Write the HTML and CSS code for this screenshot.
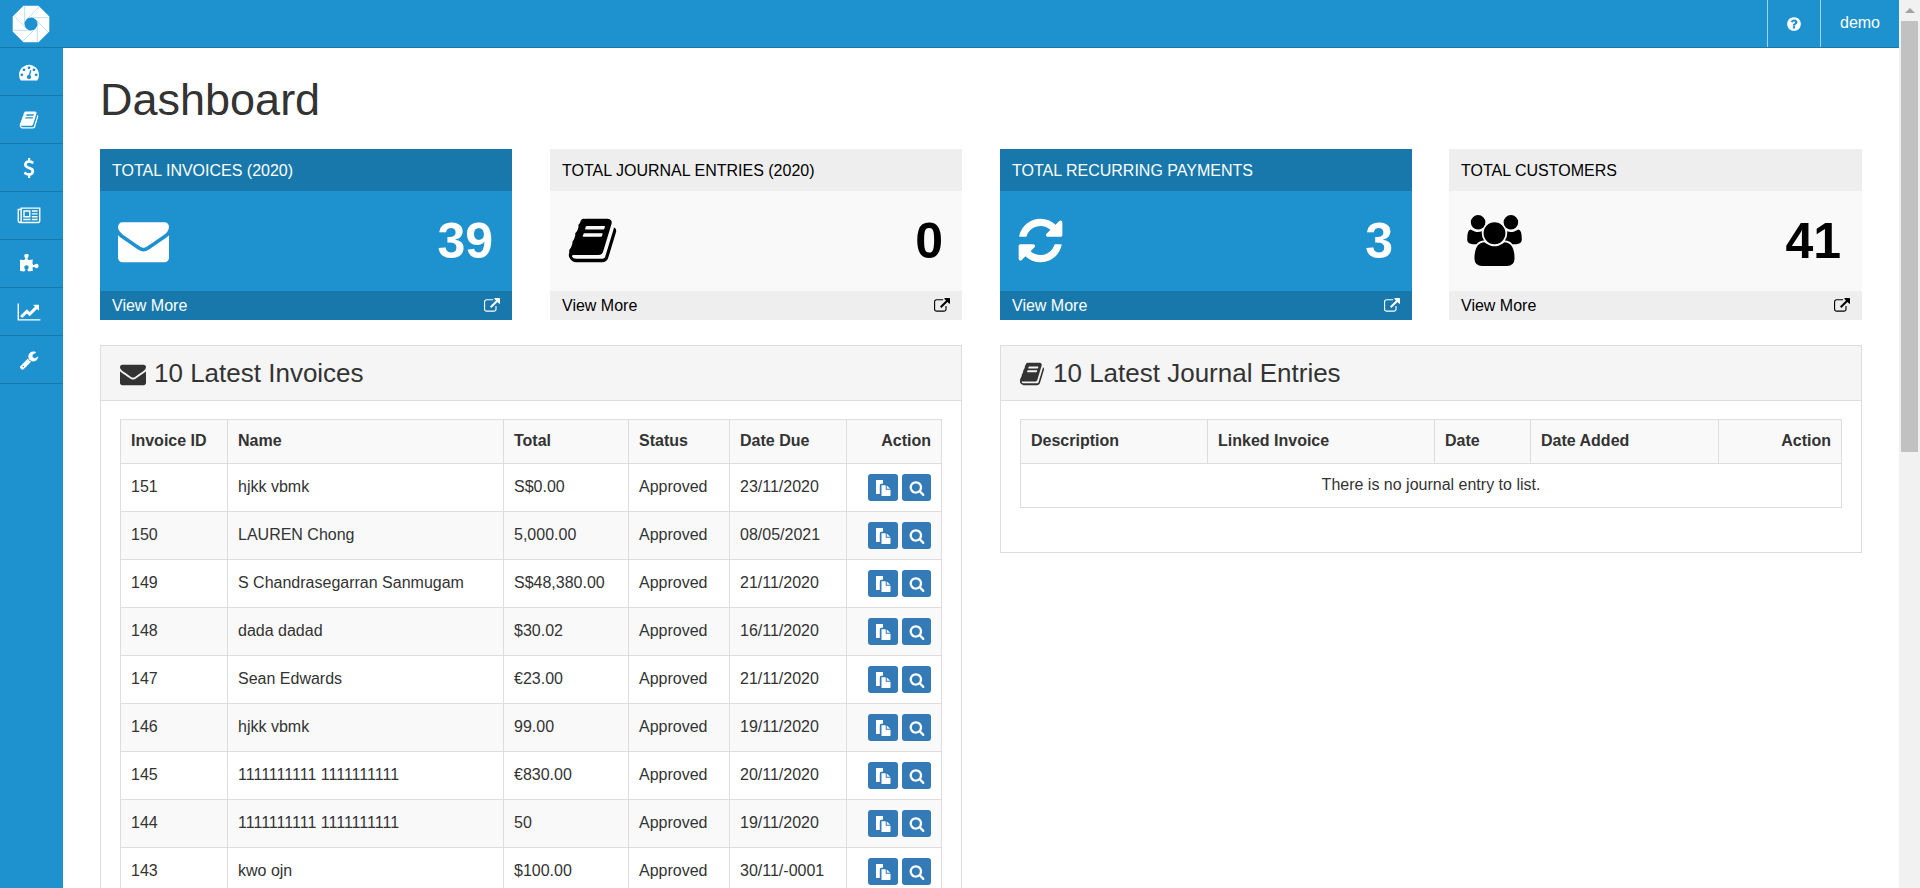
FILE: index.html
```html
<!DOCTYPE html>
<html lang="en">
<head>
    <meta charset="UTF-8">
    <title>Dashboard</title>
    <link rel="stylesheet" href="styles.css">
</head>
<body>
    <svg class="icon-defs" xmlns="http://www.w3.org/2000/svg">
        <symbol id="i-envelope" viewBox="0 0 1792 1792"><path d="M1792 710v794q0 66-47 113t-113 47h-1472q-66 0-113-47t-47-113v-794q44 49 101 87 362 246 497 345 57 42 92.5 65.5t94.5 48 110 24.5h2q51 0 110-24.5t94.5-48 92.5-65.5q170-123 498-345 57-39 100-87zm0-294q0 79-49 151t-122 123q-376 261-468 325-10 7-42.5 30.5t-54 38-52 32.5-57.5 27-50 9h-2q-23 0-50-9t-57.5-27-52-32.5-54-38-42.5-30.5q-91-64-262-182.5t-205-142.5q-62-42-117-115.5t-55-136.5q0-78 41.5-130t118.5-52h1472q65 0 112.5 47t47.5 113z"/></symbol>
        <symbol id="i-book" viewBox="0 0 1792 1792"><path d="M1703 478q40 57 18 129l-275 906q-19 64-76.5 107.5t-122.5 43.5h-923q-77 0-148.5-53.5t-99.5-131.5q-24-67-2-127 0-4 3-27t4-37q1-8-3-21.5t-3-19.5q2-11 8-21t16.5-23.5 16.5-23.5q23-38 45-91.5t30-91.5q3-10 .5-30t-.5-28q3-11 17-28t17-23q21-36 42-92t25-90q1-9-2.5-32t.5-28q4-13 22-30.5t22-22.5q19-26 42.5-84.5t27.5-96.5q1-8-3-25.5t-2-26.5q2-8 9-18t18-23 17-21q8-12 16.5-30.5t15-35 16-36 19.5-32 26.5-23.5 36-11.5 47.5 5.5l-1 3q38-9 51-9h761q74 0 114 56t18 130l-274 906q-36 119-71.5 153.5t-128.5 34.5h-869q-27 0-38 15-11 16-1 43 24 70 144 70h923q29 0 56-15.5t35-41.5l300-987q7-22 5-57 38 15 59 43zm-1064 2q-4 13 2 22.5t20 9.5h608q13 0 25.5-9.5t16.5-22.5l21-64q4-13-2-22.5t-20-9.5h-608q-13 0-25.5 9.5t-16.5 22.5zm-83 256q-4 13 2 22.5t20 9.5h608q13 0 25.5-9.5t16.5-22.5l21-64q4-13-2-22.5t-20-9.5h-608q-13 0-25.5 9.5t-16.5 22.5z"/></symbol>
        <symbol id="i-refresh" viewBox="0 0 1792 1792"><path d="M1639 1056q0 5-1 7-64 268-268 434.5t-478 166.5q-146 0-282.5-55t-243.5-157l-129 129q-19 19-45 19t-45-19-19-45v-448q0-26 19-45t45-19h448q26 0 45 19t19 45-19 45l-137 137q71 66 161 102t187 36q134 0 250-65t186-179q11-17 53-117 8-23 30-23h192q13 0 22.5 9.5t9.5 22.5zm25-800v448q0 26-19 45t-45 19h-448q-26 0-45-19t-19-45 19-45l138-138q-148-137-349-137-134 0-250 65t-186 179q-11 17-53 117-8 23-30 23h-199q-13 0-22.5-9.5t-9.5-22.5v-7q65-268 270-434.5t480-166.5q146 0 284 55.5t245 156.5l130-129q19-19 45-19t45 19 19 45z"/></symbol>
        <symbol id="i-users" viewBox="0 0 1920 1792"><path d="M593 896q-162 5-265 128h-134q-82 0-138-40.5t-56-118.5q0-353 124-353 6 0 43.5 21t97.5 42.5 119 21.5q67 0 133-23-5 37-5 66 0 139 81 256zm1071 637q0 120-73 189.5t-194 69.5h-874q-121 0-194-69.5t-73-189.5q0-53 3.5-103.5t14-109 26.5-108.5 43-97.5 62-81 85.5-53.5 111.5-20q10 0 43 21.5t73 48 107 48 135 21.5 135-21.5 107-48 73-48 43-21.5q61 0 111.5 20t85.5 53.5 62 81 43 97.5 26.5 108.5 14 109 3.5 103.5zm-1024-1277q0 106-75 181t-181 75-181-75-75-181 75-181 181-75 181 75 75 181zm704 384q0 159-112.5 271.5t-271.5 112.5-271.5-112.5-112.5-271.5 112.5-271.5 271.5-112.5 271.5 112.5 112.5 271.5zm576 225q0 78-56 118.5t-138 40.5h-134q-103-123-265-128 81-117 81-256 0-29-5-66 66 23 133 23 59 0 119-21.5t97.5-42.5 43.5-21q124 0 124 353zm-128-609q0 106-75 181t-181 75-181-75-75-181 75-181 181-75 181 75 75 181z"/></symbol>
        <symbol id="i-external" viewBox="0 0 1792 1792"><path d="M1408 928v320q0 119-84.5 203.5t-203.5 84.5h-832q-119 0-203.5-84.5t-84.5-203.5v-832q0-119 84.5-203.5t203.5-84.5h704q14 0 23 9t9 23v64q0 14-9 23t-23 9h-704q-66 0-113 47t-47 113v832q0 66 47 113t113 47h832q66 0 113-47t47-113v-320q0-14 9-23t23-9h64q14 0 23 9t9 23zm384-864v512q0 26-19 45t-45 19-45-19l-176-176-652 652q-10 10-23 10t-23-10l-114-114q-10-10-10-23t10-23l652-652-176-176q-19-19-19-45t19-45 45-19h512q26 0 45 19t19 45z"/></symbol>
        <symbol id="i-dashboard" viewBox="0 0 1792 1792"><path d="M384 1152q0-53-37.5-90.5t-90.5-37.5-90.5 37.5-37.5 90.5 37.5 90.5 90.5 37.5 90.5-37.5 37.5-90.5zm192-448q0-53-37.5-90.5t-90.5-37.5-90.5 37.5-37.5 90.5 37.5 90.5 90.5 37.5 90.5-37.5 37.5-90.5zm428 481l101-382q6-26-7.5-48.5t-38.5-29.5-48 6.5-30 39.5l-101 382q-60 5-107 43.5t-63 98.5q-20 77 20 146t117 89 146-20 89-117q16-60-6-117t-72-91zm660-33q0-53-37.5-90.5t-90.5-37.5-90.5 37.5-37.5 90.5 37.5 90.5 90.5 37.5 90.5-37.5 37.5-90.5zm-640-640q0-53-37.5-90.5t-90.5-37.5-90.5 37.5-37.5 90.5 37.5 90.5 90.5 37.5 90.5-37.5 37.5-90.5zm448 192q0-53-37.5-90.5t-90.5-37.5-90.5 37.5-37.5 90.5 37.5 90.5 90.5 37.5 90.5-37.5 37.5-90.5zm320 448q0 261-141 483-19 29-54 29h-1402q-35 0-54-29-141-221-141-483 0-182 71-348t191-286 286-191 348-71 348 71 286 191 191 286 71 348z"/></symbol>
        <symbol id="i-dollar" viewBox="0 0 1792 1792"><path d="M1362 1185q0 153-99.5 263.5t-258.5 136.5v175q0 14-9 23t-23 9h-135q-13 0-22.5-9.5t-9.5-22.5v-175q-66-9-127.5-31t-101.5-44.5-74-48-46.5-37.5-17.5-18q-17-21-2-41l103-135q7-10 23-12 15-2 24 9l2 2q113 99 243 125 37 8 74 8 81 0 142.5-43t61.5-122q0-28-15-53t-33.5-42-58.5-37.5-66-32-80-32.5q-39-16-61.5-25t-61.5-26.5-62.5-31-56.5-35.5-53.5-42.5-43.5-49-35.5-58-21-66.5-8.5-78q0-138 98-242t255-134v-180q0-13 9.5-22.5t22.5-9.5h135q14 0 23 9t9 23v176q57 6 110.5 23t87 33.5 63.5 37.5 39 29 15 14q17 18 5 38l-81 146q-8 15-23 16-14 3-27-7-3-3-14.5-12t-39-26.5-58.5-32-74.5-26-85.5-11.5q-95 0-155 43t-60 111q0 26 8.5 48t29.5 41.5 39.5 33 56 31 60.5 27 70 27.5q53 20 81 31.5t76 35 75.5 42.5 62 50 53 63.5 31.5 76.5 13 94z"/></symbol>
        <symbol id="i-news" viewBox="0 0 2048 1792"><path d="M1024 512h-384v384h384v-384zm128 640v128h-640v-128h640zm0-768v640h-640v-640h640zm640 768v128h-512v-128h512zm0-256v128h-512v-128h512zm0-256v128h-512v-128h512zm0-256v128h-512v-128h512zm-1536 960v-960h-128v960q0 26 19 45t45 19 45-19 19-45zm1664 0v-1088h-1536v1088q0 33-11 64h1483q26 0 45-19t19-45zm128-1216v1216q0 80-56 136t-136 56h-1664q-80 0-136-56t-56-136v-1088h256v-128h1792z"/></symbol>
        <symbol id="i-puzzle" viewBox="0 0 1792 1792"><path d="M1755 1083q0 81-44.5 135t-123.5 54q-41 0-77.5-17.5t-59-38-56.5-38-71-17.5q-110 0-110 124 0 39 16 115t15 115v5q-22 0-33 1-34 3-97.5 11.5t-115.5 13.5-98 5q-61 0-103-26.5t-42-83.5q0-37 17.5-71t38-56.5 38-59 17.5-77.5q0-79-54-123.5t-135-44.5q-84 0-143 45.5t-59 127.5q0 43 15 83t33.5 64.5 33.5 53 15 50.5q0 45-46 89-37 35-117 35-95 0-245-24-9-2-27.5-4t-27.5-4l-13-2q-1 0-3-1-2 0-2-1v-1024q2 1 17.5 3.5t34 5 21.5 3.5q150 24 245 24 80 0 117-35 46-44 46-89 0-22-15-50.5t-33.5-53-33.5-64.5-15-83q0-82 59-127.5t144-45.5q80 0 134 44.5t54 123.5q0 41-17.5 77.5t-38 59-38 56.5-17.5 71q0 57 42 83.5t103 26.5q64 0 180-15t163-17v2q-1 2-3.5 17.5t-5 34-3.5 21.5q-24 150-24 245 0 80 35 117 44 46 89 46 22 0 50.5-15t53-33.5 64.5-33.5 83-15q82 0 127.5 59t45.5 143z"/></symbol>
        <symbol id="i-chart" viewBox="0 0 2048 1792"><path d="M2048 1536v128h-2048v-1536h128v1408h1920zm-128-1248v435q0 21-19.5 29.5t-35.5-7.5l-121-121-633 633q-10 10-23 10t-23-10l-233-233-416 416-192-192 585-585q10-10 23-10t23 10l233 233 464-464-121-121q-16-16-7.5-35.5t29.5-19.5h435q14 0 23 9t9 23z"/></symbol>
        <symbol id="i-wrench" viewBox="0 0 1792 1792"><path d="M448 1472q0-26-19-45t-45-19-45 19-19 45 19 45 45 19 45-19 19-45zm644-420l-682 682q-37 37-90 37-52 0-91-37l-106-108q-38-36-38-90 0-53 38-91l681-681q39 98 114.5 173.5t173.5 114.5zm634-435q0 39-23 106-47 134-164.5 217.5t-258.5 83.5q-185 0-316.5-131.5t-131.5-316.5 131.5-316.5 316.5-131.5q58 0 121.5 16.5t107.5 46.5q16 11 16 28t-16 28l-293 169v224l193 107q5-3 79-48.5t135.5-81 70.5-35.5q15 0 23.5 10t8.5 25z"/></symbol>
        <symbol id="i-question" viewBox="0 0 1792 1792"><path d="M1024 1376v-192q0-14-9-23t-23-9h-192q-14 0-23 9t-9 23v192q0 14 9 23t23 9h192q14 0 23-9t9-23zm256-672q0-88-55.5-163t-138.5-116-170-41q-243 0-371 213-15 24 8 42l132 100q7 6 19 6 16 0 25-12 53-68 86-92 34-24 86-24 48 0 85.5 26t37.5 59q0 38-20 61t-68 45q-63 28-115.5 86.5t-52.5 125.5v36q0 14 9 23t23 9h192q14 0 23-9t9-23q0-19 21.5-49.5t54.5-49.5q32-18 49-28.5t46-35 44.5-48 28-60.5 12.5-81zm384 192q0 209-103 385.5t-279.5 279.5-385.5 103-385.5-103-279.5-279.5-103-385.5 103-385.5 279.5-279.5 385.5-103 385.5 103 279.5 279.5 103 385.5z"/></symbol>
        <symbol id="i-files" viewBox="0 0 16 16"><path d="M1.5 0h6.5v3.8h-1.6a1.6 1.6 0 0 0-1.6 1.6v8.6h-3.3a.5.5 0 0 1-.5-.5v-13a.5.5 0 0 1 .5-.5z"/><path d="M6.5 5.2h4.2v4.5h4.8v5.8a.5.5 0 0 1-.5.5h-8a.5.5 0 0 1-.5-.5z"/><path d="M11.7 5.4l3.6 3.4h-3.6z"/></symbol>
        <symbol id="i-search" viewBox="0 0 1792 1792"><path d="M1216 832q0-185-131.5-316.5t-316.5-131.5-316.5 131.5-131.5 316.5 131.5 316.5 316.5 131.5 316.5-131.5 131.5-316.5zm512 832q0 52-38 90t-90 38q-54 0-90-38l-343-342q-179 124-399 124-143 0-273.5-55.5t-225-150-150-225-55.5-273.5 55.5-273.5 150-225 225-150 273.5-55.5 273.5 55.5 225 150 150 225 55.5 273.5q0 220-124 399l343 343q37 37 37 90z"/></symbol>
    </svg>

    <div class="app">
        <div class="window">
            <header class="topbar">
                <a class="logo" href="#">
                    <svg viewBox="0 0 38 38" width="38" height="38">
                        <path class="logo-ring" fill-rule="evenodd" d="M11.7 1.4 L26.3 1.4 L36.6 11.7 L36.6 26.3 L26.3 36.6 L11.7 36.6 L1.4 26.3 L1.4 11.7 Z M19 11.8 A7.2 7.2 0 1 0 19 26.2 A7.2 7.2 0 1 0 19 11.8 Z"/>
                        <path class="logo-blades" d="M25.3 19 L25.3 37 M23.45 23.45 L10.7 36.2 M19 25.3 L1 25.3 M14.55 23.45 L1.85 10.8 M12.7 19 L12.7 1 M14.55 14.55 L27.3 1.8 M19 12.7 L37 12.7 M23.45 14.55 L36.2 27.3"/>
                    </svg>
                </a>
                <div class="topbar-right">
                    <a class="topbar-link help" href="#"><svg class="icon"><use href="#i-question"/></svg></a>
                    <a class="topbar-link user" href="#">demo</a>
                </div>
            </header>

            <div class="layout">
                <nav class="sidebar">
                    <a href="#"><svg class="icon"><use href="#i-dashboard"/></svg></a>
                    <a href="#"><svg class="icon"><use href="#i-book"/></svg></a>
                    <a href="#"><svg class="icon"><use href="#i-dollar"/></svg></a>
                    <a href="#"><svg class="icon wide"><use href="#i-news"/></svg></a>
                    <a href="#"><svg class="icon"><use href="#i-puzzle"/></svg></a>
                    <a href="#"><svg class="icon wide"><use href="#i-chart"/></svg></a>
                    <a href="#"><svg class="icon"><use href="#i-wrench"/></svg></a>
                </nav>

                <main class="content">
                    <h1>Dashboard</h1>

                    <div class="tiles">
                        <div class="tile tile-blue">
                            <div class="tile-heading">TOTAL INVOICES (2020)</div>
                            <div class="tile-body">
                                <svg class="tile-icon"><use href="#i-envelope"/></svg>
                                <span class="tile-count">39</span>
                            </div>
                            <a class="tile-footer" href="#">View More <svg class="icon"><use href="#i-external"/></svg></a>
                        </div>
                        <div class="tile tile-grey">
                            <div class="tile-heading">TOTAL JOURNAL ENTRIES (2020)</div>
                            <div class="tile-body">
                                <svg class="tile-icon book"><use href="#i-book"/></svg>
                                <span class="tile-count">0</span>
                            </div>
                            <a class="tile-footer" href="#">View More <svg class="icon"><use href="#i-external"/></svg></a>
                        </div>
                        <div class="tile tile-blue">
                            <div class="tile-heading">TOTAL RECURRING PAYMENTS</div>
                            <div class="tile-body">
                                <svg class="tile-icon refresh"><use href="#i-refresh"/></svg>
                                <span class="tile-count">3</span>
                            </div>
                            <a class="tile-footer" href="#">View More <svg class="icon"><use href="#i-external"/></svg></a>
                        </div>
                        <div class="tile tile-grey tile-last">
                            <div class="tile-heading">TOTAL CUSTOMERS</div>
                            <div class="tile-body">
                                <svg class="tile-icon users"><use href="#i-users"/></svg>
                                <span class="tile-count">41</span>
                            </div>
                            <a class="tile-footer" href="#">View More <svg class="icon"><use href="#i-external"/></svg></a>
                        </div>
                    </div>

                    <div class="panels">
                        <section class="panel">
                            <h2 class="panel-heading"><svg class="panel-icon"><use href="#i-envelope"/></svg> 10 Latest Invoices</h2>
                            <div class="panel-body">
                                <table>
                                    <colgroup>
                                        <col class="inv-id"><col class="inv-name"><col class="inv-total"><col class="inv-status"><col class="inv-due"><col class="inv-action">
                                    </colgroup>
                                    <thead>
                                        <tr><th>Invoice ID</th><th>Name</th><th>Total</th><th>Status</th><th>Date Due</th><th class="right">Action</th></tr>
                                    </thead>
                                    <tbody>
                                        <tr><td>151</td><td>hjkk vbmk</td><td>S$0.00</td><td>Approved</td><td>23/11/2020</td><td class="right"><a class="btn" href="#"><svg class="icon"><use href="#i-files"/></svg></a><a class="btn" href="#"><svg class="icon"><use href="#i-search"/></svg></a></td></tr>
                                        <tr><td>150</td><td>LAUREN Chong</td><td>5,000.00</td><td>Approved</td><td>08/05/2021</td><td class="right"><a class="btn" href="#"><svg class="icon"><use href="#i-files"/></svg></a><a class="btn" href="#"><svg class="icon"><use href="#i-search"/></svg></a></td></tr>
                                        <tr><td>149</td><td>S Chandrasegarran Sanmugam</td><td>S$48,380.00</td><td>Approved</td><td>21/11/2020</td><td class="right"><a class="btn" href="#"><svg class="icon"><use href="#i-files"/></svg></a><a class="btn" href="#"><svg class="icon"><use href="#i-search"/></svg></a></td></tr>
                                        <tr><td>148</td><td>dada dadad</td><td>$30.02</td><td>Approved</td><td>16/11/2020</td><td class="right"><a class="btn" href="#"><svg class="icon"><use href="#i-files"/></svg></a><a class="btn" href="#"><svg class="icon"><use href="#i-search"/></svg></a></td></tr>
                                        <tr><td>147</td><td>Sean Edwards</td><td>€23.00</td><td>Approved</td><td>21/11/2020</td><td class="right"><a class="btn" href="#"><svg class="icon"><use href="#i-files"/></svg></a><a class="btn" href="#"><svg class="icon"><use href="#i-search"/></svg></a></td></tr>
                                        <tr><td>146</td><td>hjkk vbmk</td><td>99.00</td><td>Approved</td><td>19/11/2020</td><td class="right"><a class="btn" href="#"><svg class="icon"><use href="#i-files"/></svg></a><a class="btn" href="#"><svg class="icon"><use href="#i-search"/></svg></a></td></tr>
                                        <tr><td>145</td><td>1111111111 1111111111</td><td>€830.00</td><td>Approved</td><td>20/11/2020</td><td class="right"><a class="btn" href="#"><svg class="icon"><use href="#i-files"/></svg></a><a class="btn" href="#"><svg class="icon"><use href="#i-search"/></svg></a></td></tr>
                                        <tr><td>144</td><td>1111111111 1111111111</td><td>50</td><td>Approved</td><td>19/11/2020</td><td class="right"><a class="btn" href="#"><svg class="icon"><use href="#i-files"/></svg></a><a class="btn" href="#"><svg class="icon"><use href="#i-search"/></svg></a></td></tr>
                                        <tr><td>143</td><td>kwo ojn</td><td>$100.00</td><td>Approved</td><td>30/11/-0001</td><td class="right"><a class="btn" href="#"><svg class="icon"><use href="#i-files"/></svg></a><a class="btn" href="#"><svg class="icon"><use href="#i-search"/></svg></a></td></tr>
                                    </tbody>
                                </table>
                            </div>
                        </section>

                        <section class="panel panel-short">
                            <h2 class="panel-heading"><svg class="panel-icon book"><use href="#i-book"/></svg> 10 Latest Journal Entries</h2>
                            <div class="panel-body">
                                <table>
                                    <colgroup>
                                        <col class="jrn-desc"><col class="jrn-invoice"><col class="jrn-date"><col class="jrn-added"><col class="jrn-action">
                                    </colgroup>
                                    <thead>
                                        <tr><th>Description</th><th>Linked Invoice</th><th>Date</th><th>Date Added</th><th class="right">Action</th></tr>
                                    </thead>
                                    <tbody>
                                        <tr class="empty"><td colspan="5">There is no journal entry to list.</td></tr>
                                    </tbody>
                                </table>
                            </div>
                        </section>
                    </div>
                </main>
            </div>
        </div>

        <div class="scrollbar">
            <span class="scroll-arrow"></span>
            <span class="scroll-thumb"></span>
        </div>
    </div>
</body>
</html>
```

FILE: styles.css
```css
html, body {
    height: 100%;
    margin: 0;
    overflow: hidden;
}

body {
    font-family: "Liberation Sans", Arial, sans-serif;
    font-size: 16px;
    line-height: 1.42857;
    color: #333;
    background-color: #fff;
}

a {
    color: inherit;
    text-decoration: none;
}

.icon-defs {
    display: none;
}

.icon {
    width: 16px;
    height: 16px;
    fill: currentColor;
    display: block;
}

.app {
    display: flex;
    height: 888px;
    overflow: hidden;
}

.window {
    flex: 1;
    min-width: 0;
    display: flex;
    flex-direction: column;
}

/* top bar */
.topbar {
    height: 47px;
    flex: none;
    display: flex;
    justify-content: space-between;
    background-color: #1e91cf;
    border-bottom: 1px solid #1978ab;
    color: #fff;
}

.logo {
    padding: 5px 0 0 12px;
}

.logo-ring {
    fill: #fff;
    stroke: #fff;
    stroke-width: 1.4;
    stroke-linejoin: round;
}

.logo-blades {
    fill: none;
    stroke: #1e91cf;
    stroke-width: 0.5;
    opacity: 0.6;
}

.topbar-right {
    display: flex;
}

.topbar-link {
    display: flex;
    align-items: center;
    justify-content: center;
    border-left: 1px solid #a5d3ec;
}

.help {
    width: 52px;
}

.user {
    width: 78px;
}

/* sidebar */
.layout {
    flex: 1;
    min-height: 0;
    display: flex;
}

.sidebar {
    width: 63px;
    flex: none;
    background-color: #1e91cf;
    color: #fff;
}

.sidebar a {
    height: 47px;
    padding-right: 5px;
    display: flex;
    align-items: center;
    justify-content: center;
    border-bottom: 1px solid #1978ab;
}

.sidebar .icon {
    width: 20px;
    height: 20px;
}

.sidebar .icon.wide {
    width: 24px;
}

/* content */
.content {
    flex: 1;
    min-width: 0;
    padding: 0 37px;
    overflow: hidden;
}

h1 {
    font-size: 45px;
    font-weight: 400;
    line-height: 48px;
    margin: 28px 0 25px;
}

.tiles {
    display: grid;
    grid-template-columns: repeat(4, 412px);
    justify-content: space-between;
}

.tile-blue {
    background-color: #1e91cf;
    color: #fff;
}

.tile-grey {
    background-color: #f9f9f9;
    color: #000;
}

.tile-last {
    margin-left: -1px;
}

.tile-last .tile-body {
    padding-right: 21px;
}

.tile-heading {
    height: 42px;
    line-height: 44px;
    padding: 0 12px;
}

.tile-blue .tile-heading,
.tile-blue .tile-footer {
    background-color: #1978ab;
}

.tile-grey .tile-heading,
.tile-grey .tile-footer {
    background-color: #eee;
}

.tile-body {
    height: 100px;
    padding: 0 19px 0 18px;
    box-sizing: border-box;
    display: flex;
    align-items: center;
    justify-content: space-between;
}

.tile-icon {
    width: 51px;
    height: 51px;
    margin-top: -2px;
    fill: currentColor;
}

.tile-icon.book {
    margin-left: -1px;
}

.tile-icon.refresh {
    margin-left: -3px;
}

.tile-icon.users {
    width: 55px;
}

.tile-count {
    font-size: 50px;
    font-weight: 700;
    line-height: 1;
}

.tile-footer {
    height: 29px;
    padding: 2px 12px 0;
    box-sizing: border-box;
    display: flex;
    align-items: center;
    justify-content: space-between;
}

.tile-footer .icon {
    margin-top: -2px;
}

/* panels */
.panels {
    display: grid;
    grid-template-columns: 862px 862px;
    justify-content: space-between;
    align-items: start;
    margin-top: 25px;
}

.panel {
    border: 1px solid #ddd;
}

.panel-heading {
    height: 53px;
    padding: 1px 19px 0;
    display: flex;
    align-items: center;
    gap: 8px;
    font-size: 26px;
    font-weight: 400;
    margin: 0;
    background-color: #f5f5f5;
    border-bottom: 1px solid #ddd;
}

.panel-icon {
    width: 26px;
    height: 26px;
    fill: currentColor;
}

.panel-icon.book {
    margin-left: -1px;
}

.panel-body {
    padding: 18px 19px 19px;
}

table {
    width: 100%;
    table-layout: fixed;
    border-collapse: collapse;
}

.panel-short table {
    margin-bottom: 25px;
}

th, td {
    border: 1px solid #ddd;
    padding: 0 10px;
    text-align: left;
    white-space: nowrap;
}

th {
    height: 43px;
    font-weight: 700;
    background-color: #f9f9f9;
}

td {
    height: 47px;
}

tbody tr:nth-child(even) td {
    background-color: #f9f9f9;
}

.right,
th.right {
    text-align: right;
}

.empty td {
    height: 43px;
    text-align: center;
}

.inv-id { width: 107px; }
.inv-name { width: 276px; }
.inv-total { width: 125px; }
.inv-status { width: 101px; }
.inv-due { width: 117px; }

.jrn-desc { width: 187px; }
.jrn-invoice { width: 227px; }
.jrn-date { width: 96px; }
.jrn-added { width: 188px; }

.btn {
    display: inline-flex;
    align-items: center;
    justify-content: center;
    width: 30px;
    height: 27px;
    margin-left: 4px;
    vertical-align: middle;
    box-sizing: border-box;
    border-radius: 3px;
    background-color: #337ab7;
    color: #fff;
}

.btn + .btn {
    width: 29px;
}

/* the page's own scrollbar */
.scrollbar {
    width: 21px;
    flex: none;
    box-sizing: border-box;
    padding: 8px 2px 0;
    background-color: #f1f1f1;
    display: flex;
    flex-direction: column;
    align-items: center;
}

.scroll-arrow {
    width: 0;
    height: 0;
    border-left: 5px solid transparent;
    border-right: 5px solid transparent;
    border-bottom: 5px solid #a3a3a3;
}

.scroll-thumb {
    width: 17px;
    height: 431px;
    margin-top: 8px;
    background-color: #c1c1c1;
}
```
